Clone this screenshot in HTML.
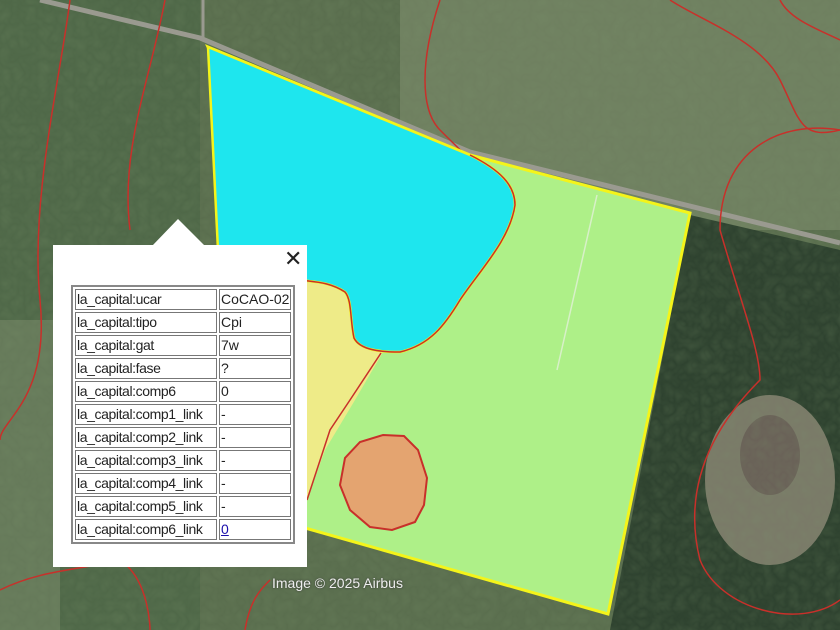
<!DOCTYPE html>
<html><head><style>
body{margin:0;width:840px;height:630px;overflow:hidden;position:relative;background:#556848;font-family:"Liberation Sans",sans-serif}
svg{position:absolute;left:0;top:0}
.pop{position:absolute;left:53px;top:245px;width:254px;height:322px;background:#fff}
.arrow{position:absolute;left:152px;top:219px;width:0;height:0;border-left:26px solid transparent;border-right:27px solid transparent;border-bottom:27px solid #fff}
.x{position:absolute;left:284px;top:246px;font-size:22px;color:#222;line-height:26px}
table{position:absolute;left:71px;top:285px;border:2px solid #888;border-collapse:separate;border-spacing:2px;font-size:14px;color:#222}
td{border:1px solid #777;height:19px;padding:0 1px;line-height:19px;white-space:nowrap}
td.a{width:138px;letter-spacing:-0.4px}td.b{width:68px}
a{color:#1a0dab;text-decoration:underline}
.cr{position:absolute;left:272px;top:575px;font-size:14px;color:#eee;text-shadow:0 0 2px #333}
</style></head><body>
<svg width="840" height="630">
<defs><filter id="n"><feTurbulence baseFrequency="0.08" numOctaves="2" seed="3"/><feColorMatrix values="0 0 0 0 0.2  0 0 0 0 0.3  0 0 0 0 0.15  0 0 0 0.25 0"/></filter></defs>
<rect width="840" height="630" fill="#5a6e4e"/>
<rect x="400" y="0" width="440" height="230" fill="#6f8060"/>
<rect x="0" y="0" width="200" height="630" fill="#4f6848"/>
<rect x="0" y="320" width="60" height="310" fill="#667a5a"/>
<polygon points="690,215 840,250 840,630 610,630" fill="#2e422f"/>
<ellipse cx="770" cy="480" rx="65" ry="85" fill="#7a7a68"/>
<ellipse cx="770" cy="455" rx="30" ry="40" fill="#6a6258"/>
<rect width="840" height="630" filter="url(#n)"/>
<polyline points="40,0 200,38 470,152 840,243" fill="none" stroke="#9a9a90" stroke-width="5"/>
<line x1="203" y1="0" x2="203" y2="40" stroke="#9a9a90" stroke-width="3"/>
<g fill="none" stroke="#c8302a" stroke-width="1.5">
<path d="M70,0 C60,80 30,200 40,300 C50,400 0,420 0,440"/>
<path d="M165,0 C150,80 120,150 130,230"/>
<path d="M440,0 C420,60 420,110 440,130 C460,150 470,160 490,175"/>
<path d="M670,0 C700,20 760,40 780,80 C800,120 800,140 840,130"/>
<path d="M780,0 C790,20 820,30 840,40"/>
<path d="M840,130 C780,120 720,150 720,230 C740,300 760,350 760,380 C720,420 680,480 700,560 C720,610 800,630 840,600"/>
<path d="M0,590 C40,570 80,570 120,560 C150,580 150,630 150,630"/>
<path d="M245,630 C250,600 260,590 270,580"/>
</g>
<polygon points="208,47 470,155 690,213 608,614 305,528 300,245" fill="#aef088" stroke="#f4f41a" stroke-width="3"/>
<path d="M305,282 L335,285 C352,292 350,310 352,330 C355,345 370,352 383,352 L355,400 L325,450 L307,500 Z" fill="#eeeb88"/>
<path d="M208,47 L470,155 C500,170 515,185 515,205 C510,240 480,270 460,300 C445,325 430,345 400,352 C380,352 360,350 354,338 C350,320 352,300 345,292 C330,282 315,282 300,280 L218,250 Z" fill="#1ee6ee" stroke="#f4f41a" stroke-width="2.5"/>
<path d="M470,155 C500,170 515,185 515,205 C510,240 480,270 460,300 C445,325 430,345 400,352 C380,352 360,350 354,338 C350,320 352,300 345,292 C330,282 315,282 300,280" fill="none" stroke="#c8302a" stroke-width="1.5"/>
<path d="M381,353 L350,400 L330,430 L307,500" fill="none" stroke="#c8302a" stroke-width="1.5"/>
<polygon points="383,435 404,436 418,450 427,478 424,505 415,522 392,530 370,527 350,510 340,485 345,458 360,442" fill="#e4a470" stroke="#c8302a" stroke-width="2"/>
<line x1="597" y1="195" x2="557" y2="370" stroke="#d8f0c8" stroke-width="1.5"/>
</svg>
<div class="arrow"></div>
<div class="pop"></div>
<div class="x">✕</div>
<table>
<tr><td class="a">la_capital:ucar</td><td class="b">CoCAO-02</td></tr>
<tr><td class="a">la_capital:tipo</td><td class="b">Cpi</td></tr>
<tr><td class="a">la_capital:gat</td><td class="b">7w</td></tr>
<tr><td class="a">la_capital:fase</td><td class="b">?</td></tr>
<tr><td class="a">la_capital:comp6</td><td class="b">0</td></tr>
<tr><td class="a">la_capital:comp1_link</td><td class="b">-</td></tr>
<tr><td class="a">la_capital:comp2_link</td><td class="b">-</td></tr>
<tr><td class="a">la_capital:comp3_link</td><td class="b">-</td></tr>
<tr><td class="a">la_capital:comp4_link</td><td class="b">-</td></tr>
<tr><td class="a">la_capital:comp5_link</td><td class="b">-</td></tr>
<tr><td class="a">la_capital:comp6_link</td><td class="b"><a>0</a></td></tr>
</table>
<div class="cr">Image © 2025 Airbus</div>
</body></html>
